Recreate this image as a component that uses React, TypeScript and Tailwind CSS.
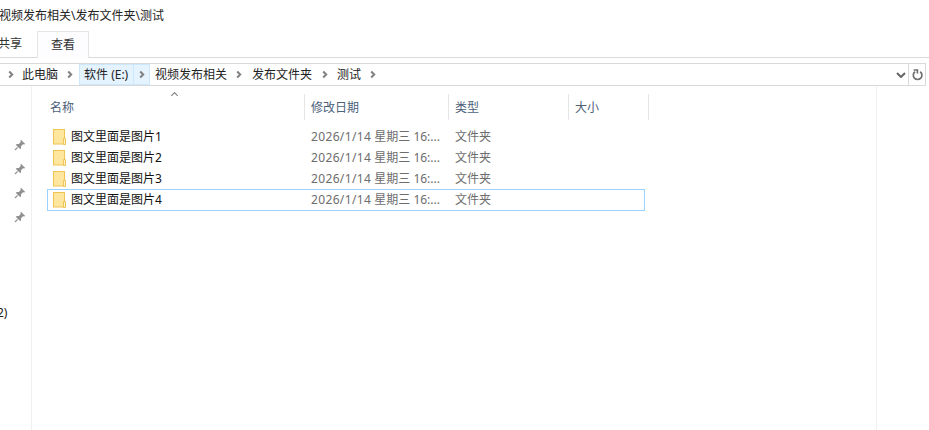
import React from 'react';

const cjk = 'font-["Noto_Sans","Noto_Sans_CJK_SC",sans-serif]';

const Chevron = ({ className = '' }: { className?: string }) => (
  <svg width="6" height="9" viewBox="0 0 6 9" className={`shrink-0 ${className}`}>
    <path d="M1.2 1.5 L4.2 4.5 L1.2 7.5" fill="none" stroke="#808080" strokeWidth="2" />
  </svg>
);

const Pin = () => (
  <svg width="12" height="12" viewBox="0 0 12 12">
    <path d="M7 0.8 L11.2 5 L10.2 5.6 L9 5.2 L7 7.2 L7 9.4 L6 10 L2 6 L2.6 5 L4.8 5 L6.8 3 L6.4 1.8 Z" fill="#8f8f8f" />
    <path d="M3.6 8.4 L1 11" stroke="#8f8f8f" strokeWidth="1.2" />
  </svg>
);

const Folder = () => (
  <svg width="13" height="16" viewBox="0 0 13 16" className="shrink-0">
    <rect x="0.5" y="0.5" width="11" height="14.5" fill="#ffe69f" stroke="#eec555" />
    <path d="M10.5 15.5 V9.5 H12.5 V15.5 Z" fill="#fff3c9" stroke="#eec555" />
  </svg>
);

const rows = ['图文里面是图片1', '图文里面是图片2', '图文里面是图片3', '图文里面是图片4'];

const Row = ({ name, focused }: { name: string; focused: boolean }) => (
  <div className={`flex w-[598px] items-center border ${focused ? 'h-[22px] border-[#99d1ff]' : 'h-[21px] border-transparent'}`}>
    <div className="ml-[5px] flex w-[256px] items-center gap-[5px]">
      <Folder />
      <span className="text-[12px] text-[#111]">{name}</span>
    </div>
    <span className="ml-[2px] w-[144px] whitespace-nowrap text-[12px] text-[#6d6d6d]">
      <span className="tracking-[0.35px]">2026/1/14</span> 星期三 16:...
    </span>
    <span className="text-[12px] text-[#6d6d6d]">文件夹</span>
  </div>
);

const Head = ({ label, width }: { label: string; width: string }) => (
  <div className={`flex h-[26px] items-center border-r border-[#e5e5e5] pl-[6px] pt-[2px] text-[12px] text-[#4c607a] ${width}`}>{label}</div>
);

export default function App() {
  return (
    <div className={`flex h-[430px] w-[929px] flex-col overflow-hidden bg-white ${cjk}`}>
      {/* title */}
      <div className="flex h-[31px] items-center pt-[1px] text-[12px] text-[#222]">
        <span className="-ml-[1px]">视频发布相关\发布文件夹\测试</span>
      </div>

      {/* ribbon tabs */}
      <div className="flex h-[27px] items-stretch border-b border-[#dadada] text-[12px] text-[#333]">
        <span className="-ml-[2px] flex w-[39px] items-center">共享</span>
        <span className="-mb-px flex w-[52px] items-center justify-center border border-b-0 border-[#e5e5e5] bg-[#fdfdff] pb-[1px]">查看</span>
      </div>

      {/* address bar */}
      <div className="mt-[5px] flex h-[23px] w-[926px] items-center border-y border-r border-[#d9d9d9] text-[12px] text-[#222]">
        <Chevron className="ml-[8px]" />
        <span className="ml-[8px]">此电脑</span>
        <Chevron className="ml-[9px]" />
        <div className="ml-[6px] flex h-full w-[71px] border border-[#cce8ff] bg-[#e5f3ff]">
          <span className="flex w-[54px] items-center border-r border-[#cce8ff] pl-[4px]">软件 (E:)</span>
          <span className="flex flex-1 items-center pl-[5px]"><Chevron /></span>
        </div>
        <span className="ml-[5px]">视频发布相关</span>
        <Chevron className="ml-[9px]" />
        <span className="ml-[10px]">发布文件夹</span>
        <Chevron className="ml-[10px]" />
        <span className="ml-[9px]">测试</span>
        <Chevron className="ml-[9px]" />
        <div className="ml-auto flex h-full items-center">
          <svg width="10" height="6" viewBox="0 0 10 6" className="mr-[2px]">
            <path d="M1 1 L5 5 L9 1" fill="none" stroke="#666" strokeWidth="2" />
          </svg>
          <div className="flex h-full w-[17px] items-center justify-center border-l border-[#d9d9d9]">
            <svg width="11" height="12" viewBox="0 0 11 12">
              <path d="M3 2.8 A4.3 4.3 0 1 0 8.2 2.8" fill="none" stroke="#707070" strokeWidth="1.7" />
              <path d="M1.6 1 H5.4 V4.6" fill="none" stroke="#707070" strokeWidth="1.7" />
            </svg>
          </div>
        </div>
      </div>

      {/* body */}
      <div className="flex flex-1">
        {/* nav pane */}
        <div className="flex w-[32px] shrink-0 flex-col border-r border-[#f0f0f0]">
          <div className="mt-[53px] flex flex-col items-end gap-[12px] pr-[5px]">
            <Pin />
            <Pin />
            <Pin />
            <Pin />
          </div>
          <span className="mt-[81px] -ml-[3px] text-[12px] leading-[18px] text-[#222]">2)</span>
        </div>

        {/* file list */}
        <div className="relative w-[845px] shrink-0 border-r border-[#f0f0f0]">
          <span className="absolute left-[140px] top-[7px] h-[5px] w-[5px] rotate-45 border-l border-t border-[#777]" />
          <div className="mt-[8px] flex">
            <Head label="名称" width="ml-[12px] w-[261px]" />
            <Head label="修改日期" width="w-[144px]" />
            <Head label="类型" width="w-[120px]" />
            <Head label="大小" width="w-[80px]" />
          </div>
          <div className="ml-[15px] mt-[6px] flex flex-col">
            {rows.map((r, i) => (
              <Row key={r} name={r} focused={i === 3} />
            ))}
          </div>
        </div>
      </div>
    </div>
  );
}
